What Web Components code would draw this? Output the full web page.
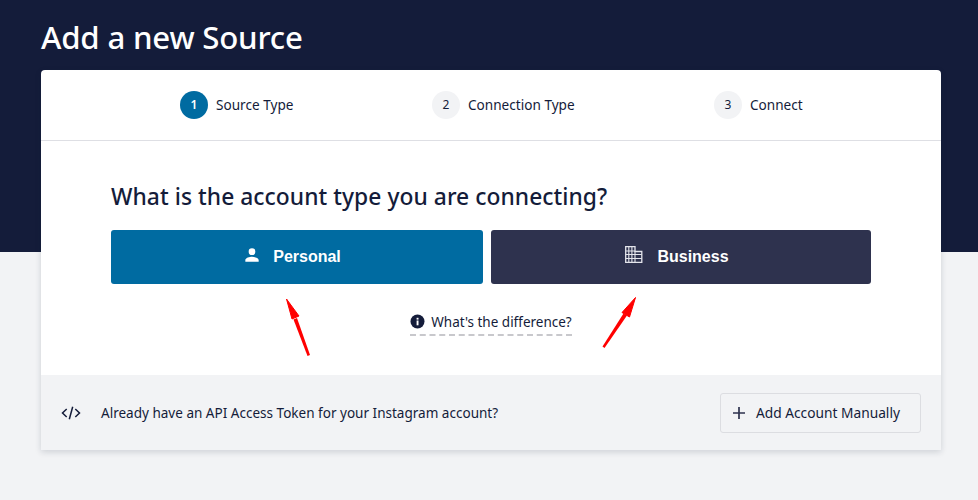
<!DOCTYPE html>
<html><head><meta charset="utf-8"><title>Add a new Source</title>
<style>html,body{margin:0;padding:0;height:500px;overflow:hidden}body{font-family:"Noto Sans","Open Sans",sans-serif;color:#141c3a}</style>
</head><body>
<source-page>
  <span slot="title">Add a new Source</span>
  <source-card>
    <step-bar slot="steps">
      <step-item n="1" active style="width:252px">Source Type</step-item>
      <step-item n="2" style="width:282px">Connection Type</step-item>
      <step-item n="3">Connect</step-item>
    </step-bar>
    <span slot="question">What is the account type you are connecting?</span>
    <choice-button slot="choices" kind="personal" style="flex:0 0 372px">Personal</choice-button>
    <choice-button slot="choices" kind="business" style="flex:0 0 380px">Business</choice-button>
    <help-link slot="help">What's the difference?</help-link>
    <token-bar slot="footer">Already have an API Access Token for your Instagram account?</token-bar>
  </source-card>
</source-page>
<script>
function def(name, html){
  customElements.define(name, class extends HTMLElement{
    connectedCallback(){
      if(this.shadowRoot) return;
      const r=this.attachShadow({mode:'open'});
      r.innerHTML=typeof html==='function'?html(this):html;
    }
  });
}
def('source-page',`<style>
:host{display:flex;flex-direction:column;width:978px;height:500px;box-sizing:border-box;padding:0 37px 0 41px;
background:linear-gradient(#141c3a 0 252px,#f2f3f5 252px)}
h1{margin:0;height:70px;box-sizing:border-box;padding-top:16px;font:500 31.2px/43px "Noto Sans","Open Sans",sans-serif;color:#fff;letter-spacing:-.2px}
</style><h1><slot name="title"></slot></h1><slot></slot>`);
def('source-card',`<style>
:host{display:block;position:relative;width:900px;height:380px;background:#fff;border-radius:4px 4px 0 0;box-shadow:0 2px 6px rgba(20,28,58,.16)}
.steps{display:block;height:70px;border-bottom:1px solid #dedfe4}
.body{padding:39px 70px 0;height:234px;box-sizing:border-box}
h2{margin:0 0 16px;font:500 22.8px/34px "Noto Sans","Open Sans",sans-serif;color:#141c3a;letter-spacing:.05px;height:34px}
.choices{display:flex;gap:8px}
.help{display:flex;justify-content:center;margin-top:26px}
svg{position:absolute;overflow:visible;left:0;top:0;pointer-events:none}
</style>
<div class="steps"><slot name="steps"></slot></div>
<div class="body"><h2><slot name="question"></slot></h2>
<div class="choices"><slot name="choices"></slot></div>
<div class="help"><slot name="help"></slot></div></div>
<slot name="footer"></slot>
<svg width="900" height="380" viewBox="0 0 900 380" fill="red" stroke="none">
<path d="M269 285 L266.500 286 L252.500 249.500 L256 248Z"/>
<path d="M245.500 229 L258 246 L251 249Z" stroke="red" stroke-width="1"/>
<path d="M561.500 276.500 L563.500 278 L586 245.500 L582.500 243.500Z"/>
<path d="M594.500 227.500 L588.500 247 L581 242.500Z" stroke="red" stroke-width="1"/>
</svg>`);
def('step-bar',`<style>:host{display:flex;height:70px;padding-left:139px;box-sizing:border-box;align-items:center}</style><slot></slot>`);
def('step-item',h=>`<style>
:host{display:flex;align-items:center;gap:8px;font:400 13.6px/20px "Noto Sans","Open Sans",sans-serif;color:#141c3a;box-sizing:border-box}
b{flex:0 0 28px;height:28px;border-radius:50%;display:flex;align-items:center;justify-content:center;font-weight:${h.hasAttribute('active')?600:400};font-size:12px;
background:${h.hasAttribute('active')?'#006ba1':'#f2f3f5'};color:${h.hasAttribute('active')?'#fff':'#141c3a'}}
</style><b>${h.getAttribute('n')}</b><span><slot></slot></span>`);
const person=`<svg width="20" height="20" viewBox="0 0 24 24" fill="#fff"><path d="M12 12a4 4 0 1 0 0-8 4 4 0 0 0 0 8zm0 2c-2.700 0-8 1.340-8 4v2h16v-2c0-2.660-5.300-4-8-4z"/></svg>`;
const biz=`<svg width="18" height="18" viewBox="0 0 18 18" fill="none" stroke="#e4e5ec" stroke-width="1.300"><path d="M.7 16.400V.7H10V5.500H16.800V16.400Z"/><path d="M.7 5H10M.7 8.500H16.800M.7 12.500H16.800M3.800 .7V16.400M6.900 .7V16.400M10 5.500V16.400" stroke-width="1.100"/></svg>`;
def('choice-button',h=>{const p=h.getAttribute('kind')==='personal';return `<style>
:host{display:flex;align-items:center;justify-content:center;height:54px;box-sizing:border-box;border-radius:3px;color:#fff;padding-right:${p?'11px':'8px'};
font:700 16px/20px "Liberation Sans",Arial,sans-serif;background:${p?'#006ba1':'#2e324e'};gap:${p?'11px':'14px'}}
svg{display:block;position:relative;top:-2px}
</style>${p?person:biz}<slot></slot>`});
def('help-link',`<style>
:host{display:flex;align-items:center;gap:6px;height:26px;box-sizing:border-box;padding-bottom:1px;font:400 13.5px/20px "Noto Sans","Open Sans",sans-serif;color:#141c3a;
border-bottom:2px dashed #c8c8cc}
svg{display:block}
</style><svg width="15" height="15" viewBox="0 0 15 15"><circle cx="7.500" cy="7.500" r="7" fill="#141c3a"/><rect x="6.600" y="6.500" width="1.900" height="4.800" fill="#fff"/><rect x="6.600" y="3.800" width="1.900" height="1.800" fill="#fff"/></svg><span><slot></slot></span>`);
def('token-bar',`<style>
:host{display:flex;align-items:center;height:75px;box-sizing:border-box;background:#f2f3f5;padding:0 20px;font:400 13.54px/20px "Noto Sans","Open Sans",sans-serif;color:#141c3a}
.code{display:block;margin-right:20px;flex:none}
.t{flex:1}
.btn{display:flex;align-items:center;width:201px;height:40px;box-sizing:border-box;border:1px solid #dcdde1;border-radius:3px;padding-left:11px;gap:10px;font-size:13.74px}
.btn svg{display:block;flex:none}
</style>
<svg class="code" width="20" height="20" viewBox="0 0 20 20" fill="none" stroke="#141c3a" stroke-width="1.500"><path d="M5.700 6L1.500 10L5.700 14M14.300 6L18.500 10L14.300 14M11.700 3.800L8.300 16.200"/></svg>
<span class="t"><slot></slot></span>
<div class="btn"><svg width="14" height="14" viewBox="0 0 14 14" stroke="#2e324e" stroke-width="1.700"><path d="M7 1V13M1 7H13"/></svg><span>Add Account Manually</span></div>`);
</script>
</body></html>
